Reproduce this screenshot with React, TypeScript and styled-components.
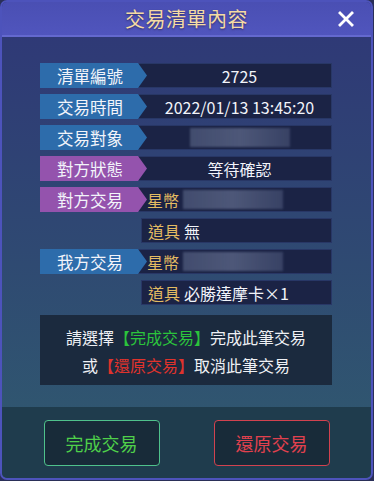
import React from "react";
import styled, { createGlobalStyle } from "styled-components";

const Global = createGlobalStyle`
  html, body { margin: 0; padding: 0; background: #2a2f58; }
  body { font-family: "Noto Sans CJK TC", "Noto Sans", sans-serif; width: 374px; height: 481px; overflow: hidden; }
`;

const Panel = styled.div`
  box-sizing: border-box;
  width: 373px;
  height: 480px;
  border: 2px solid #4d53bb;
  border-radius: 7px;
  overflow: hidden;
  display: flex;
  flex-direction: column;
  background: linear-gradient(180deg, #2f3777 0%, #2f4a72 55%, #305b6f 100%);
`;

const Header = styled.div`
  height: 33px;
  flex: none;
  display: grid;
  grid-template-columns: 1fr auto 1fr;
  align-items: center;
  background: linear-gradient(180deg, #4a4fb3 0%, #5055bd 100%);
  border-bottom: 2px solid #6469cf;
`;

const Title = styled.div`
  grid-column: 2;
  color: #f4dba4;
  font-size: 20px;
  letter-spacing: 0.5px;
  text-shadow: 0 1px 2px rgba(30, 20, 60, 0.6);
`;

const Close = styled.button`
  grid-column: 3;
  justify-self: end;
  margin-right: 16px;
  width: 18px;
  height: 18px;
  padding: 0;
  border: none;
  background: none;
  display: flex;
  align-items: center;
  justify-content: center;
`;

const Body = styled.div`
  flex: 1;
  padding: 26px 39px 22px 38px;
  display: flex;
  flex-direction: column;
  gap: 6px;
`;

const Row = styled.div`
  display: flex;
  height: 25px;
`;

const Label = styled.div<{ $tone: "blue" | "purple" }>`
  position: relative;
  z-index: 1;
  flex: none;
  width: 107px;
  height: 25px;
  box-sizing: border-box;
  padding-left: 17px;
  display: flex;
  align-items: center;
  color: #f2f4fa;
  font-size: 16.5px;
  background: ${(p) => (p.$tone === "blue" ? "#2d6cab" : "#9453ad")};
  clip-path: polygon(0 0, 98px 0, 107px 50%, 98px 100%, 0 100%);
`;

const Value = styled.div<{ $align?: "center" | "left"; $indent?: boolean }>`
  flex: 1;
  box-sizing: border-box;
  height: 25px;
  margin-left: ${(p) => (p.$indent ? "101px" : "-9px")};
  padding-left: ${(p) => (p.$align === "left" ? (p.$indent ? "6px" : "8px") : "9px")};
  display: flex;
  align-items: center;
  justify-content: ${(p) => (p.$align === "left" ? "flex-start" : "center")};
  background: #1b2345;
  border: 1px solid #283766;
  color: #f2f4fa;
  font-size: 16px;
  white-space: nowrap;
`;

const Gold = styled.span`
  color: #e3bb62;
  margin-right: 4px;
`;

const Blur = styled.div<{ $w: number }>`
  width: ${(p) => p.$w}px;
  height: 19px;
  background: linear-gradient(90deg, rgba(120, 134, 168, 0.42), rgba(128, 140, 172, 0.5) 50%, rgba(110, 124, 160, 0.35));
  filter: blur(1.2px);
`;

const Message = styled.div`
  margin-top: 4px;
  height: 70px;
  box-sizing: border-box;
  padding-top: 8px;
  background: #1b2a3e;
  color: #eef0f4;
  font-size: 16px;
  line-height: 28px;
  text-align: center;
`;

const Accent = styled.span<{ $tone: "green" | "red" }>`
  color: ${(p) => (p.$tone === "green" ? "#2bc43c" : "#e0332c")};
`;

const Footer = styled.div`
  flex: none;
  height: 71px;
  background: #1f3c4d;
  display: flex;
  justify-content: center;
  align-items: flex-start;
  gap: 54px;
  padding-top: 13px;
  box-sizing: border-box;
`;

const ActionButton = styled.button<{ $tone: "green" | "red" }>`
  width: 116px;
  height: 46px;
  border-radius: 4px;
  background: #182b39;
  border: 1px solid ${(p) => (p.$tone === "green" ? "#4fc28c" : "#d2424f")};
  color: ${(p) => (p.$tone === "green" ? "#4fd04a" : "#e2414e")};
  font-family: "Noto Sans CJK TC", "Noto Sans", sans-serif;
  font-size: 18px;
  padding: 0;
`;

export default function App() {
  return (
    <>
      <Global />
      <Panel>
        <Header>
          <Title>交易清單內容</Title>
          <Close aria-label="close">
            <svg width="16" height="16" viewBox="0 0 16 16">
              <path d="M2 2 L14 14 M14 2 L2 14" stroke="#ffffff" strokeWidth="2.8" strokeLinecap="square" />
            </svg>
          </Close>
        </Header>
        <Body>
          <Row>
            <Label $tone="blue">清單編號</Label>
            <Value>2725</Value>
          </Row>
          <Row>
            <Label $tone="blue">交易時間</Label>
            <Value>2022/01/13 13:45:20</Value>
          </Row>
          <Row>
            <Label $tone="blue">交易對象</Label>
            <Value>
              <Blur $w={100} />
            </Value>
          </Row>
          <Row>
            <Label $tone="purple">對方狀態</Label>
            <Value>等待確認</Value>
          </Row>
          <Row>
            <Label $tone="purple">對方交易</Label>
            <Value $align="left">
              <Gold>星幣</Gold>
              <Blur $w={100} />
            </Value>
          </Row>
          <Row>
            <Value $align="left" $indent>
              <Gold>道具</Gold>無
            </Value>
          </Row>
          <Row>
            <Label $tone="blue">我方交易</Label>
            <Value $align="left">
              <Gold>星幣</Gold>
              <Blur $w={100} />
            </Value>
          </Row>
          <Row>
            <Value $align="left" $indent>
              <Gold>道具</Gold>必勝達摩卡×1
            </Value>
          </Row>
          <Message>
            請選擇<Accent $tone="green">【完成交易】</Accent>完成此筆交易
            <br />
            或<Accent $tone="red">【還原交易】</Accent>取消此筆交易
          </Message>
        </Body>
        <Footer>
          <ActionButton $tone="green">完成交易</ActionButton>
          <ActionButton $tone="red">還原交易</ActionButton>
        </Footer>
      </Panel>
    </>
  );
}
